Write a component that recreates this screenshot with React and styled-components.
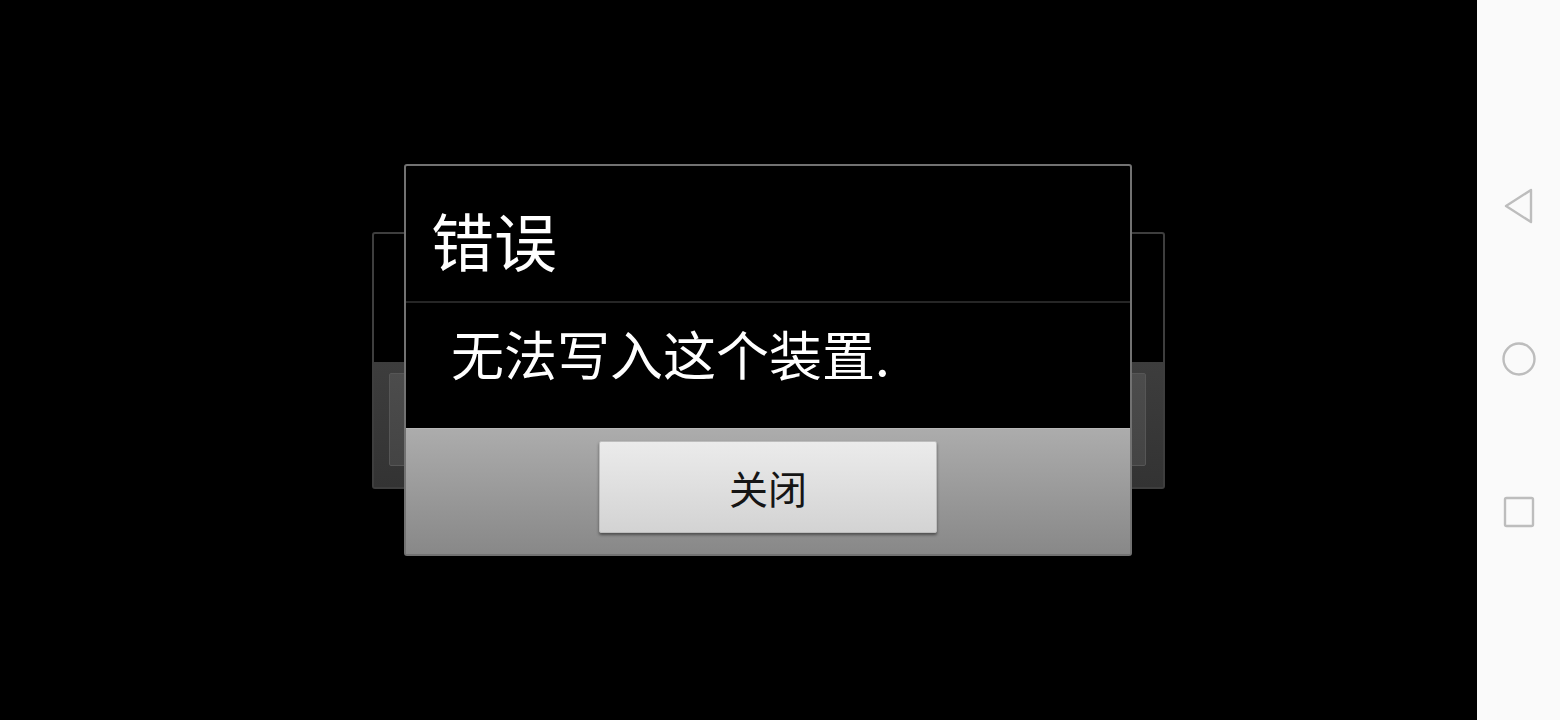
import React from "react";
import styled, { createGlobalStyle } from "styled-components";

const GlobalStyle = createGlobalStyle`
  html, body {
    margin: 0;
    padding: 0;
    background: #000;
  }
  body {
    font-family: "Noto Sans CJK SC", "Noto Sans", sans-serif;
  }
`;

const App = () => {
  return (
    <>
      <GlobalStyle />
      <Page>
        <Screen>
          <BackDialog>
            <BackTop />
            <BackBar>
              <BackButton />
            </BackBar>
          </BackDialog>
          <Dialog>
            <TitleRow>
              <Title>错误</Title>
            </TitleRow>
            <Message>
              <p>无法写入这个装置.</p>
            </Message>
            <ButtonBar>
              <CloseButton>关闭</CloseButton>
            </ButtonBar>
          </Dialog>
        </Screen>
        <NavBar>
          <NavIcon>
            <svg width="34" height="38" viewBox="0 0 34 38">
              <path
                d="M29 3 L4 19 L29 35 Z"
                fill="none"
                stroke="#bdbdbd"
                strokeWidth="2.4"
                strokeLinejoin="round"
              />
            </svg>
          </NavIcon>
          <NavIcon>
            <svg width="36" height="36" viewBox="0 0 36 36">
              <circle cx="18" cy="18" r="15.5" fill="none" stroke="#bdbdbd" strokeWidth="2.4" />
            </svg>
          </NavIcon>
          <NavIcon>
            <svg width="34" height="34" viewBox="0 0 34 34">
              <rect x="3" y="3" width="28" height="28" rx="1.5" fill="none" stroke="#bdbdbd" strokeWidth="2.4" />
            </svg>
          </NavIcon>
        </NavBar>
      </Page>
    </>
  );
};

//styled components
const Page = styled.div`
  display: flex;
  width: 1560px;
  height: 720px;
  overflow: hidden;
`;
const Screen = styled.div`
  flex: 1;
  display: grid;
  place-items: center;
  padding-left: 59px;
  background: #000;
  & > * {
    grid-area: 1 / 1;
  }
`;
const BackDialog = styled.div`
  width: 793px;
  height: 257px;
  box-sizing: border-box;
  border: 2px solid #3e3e3e;
  border-radius: 3px;
  display: flex;
  flex-direction: column;
  background: #000;
`;
const BackTop = styled.div`
  height: 128px;
`;
const BackBar = styled.div`
  flex: 1;
  background: linear-gradient(#3d3d3d, #333);
  padding: 11px 17px 0 15px;
`;
const BackButton = styled.div`
  height: 91px;
  border-radius: 2px;
  border: 1px solid #565656;
  background: linear-gradient(#4c4c4c, #444);
`;
const Dialog = styled.div`
  position: relative;
  width: 728px;
  height: 392px;
  box-sizing: border-box;
  border: 2px solid #727272;
  border-radius: 3px;
  background: #000;
  display: flex;
  flex-direction: column;
  color: #fff;
`;
const TitleRow = styled.div`
  height: 137px;
  box-sizing: border-box;
  border-bottom: 2px solid #262626;
  display: flex;
  align-items: center;
  padding: 10px 0 0 25px;
`;
const Title = styled.h2`
  margin: 0;
  font-size: 63px;
  font-weight: 400;
  line-height: 1;
`;
const Message = styled.div`
  height: 125px;
  box-sizing: border-box;
  padding: 24px 0 0 45px;
  & p {
    margin: 0;
    font-size: 53px;
    font-weight: 400;
    line-height: 1;
    white-space: nowrap;
  }
`;
const ButtonBar = styled.div`
  flex: 1;
  display: flex;
  justify-content: center;
  align-items: flex-start;
  padding: 12px 0 0 0;
  background: linear-gradient(#acacac, #888);
  border-top: 1px solid #b8b8b8;
`;
const CloseButton = styled.button`
  width: 338px;
  height: 92px;
  border: 1px solid #bdbdbd;
  border-radius: 2px;
  background: linear-gradient(#ebebeb, #d3d3d3);
  box-shadow: 0 2px 3px rgba(0, 0, 0, 0.45);
  font-family: "Noto Sans CJK SC", "Noto Sans", sans-serif;
  font-size: 39px;
  font-weight: 400;
  color: #151515;
  padding: 0;
  line-height: 1;
`;
const NavBar = styled.div`
  width: 83px;
  background: #fafafa;
  display: flex;
  flex-direction: column;
  align-items: center;
  padding-top: 187px;
  gap: 115px;
  box-sizing: border-box;
`;
const NavIcon = styled.div`
  height: 38px;
  display: flex;
  align-items: center;
  justify-content: center;
`;

export default App;
